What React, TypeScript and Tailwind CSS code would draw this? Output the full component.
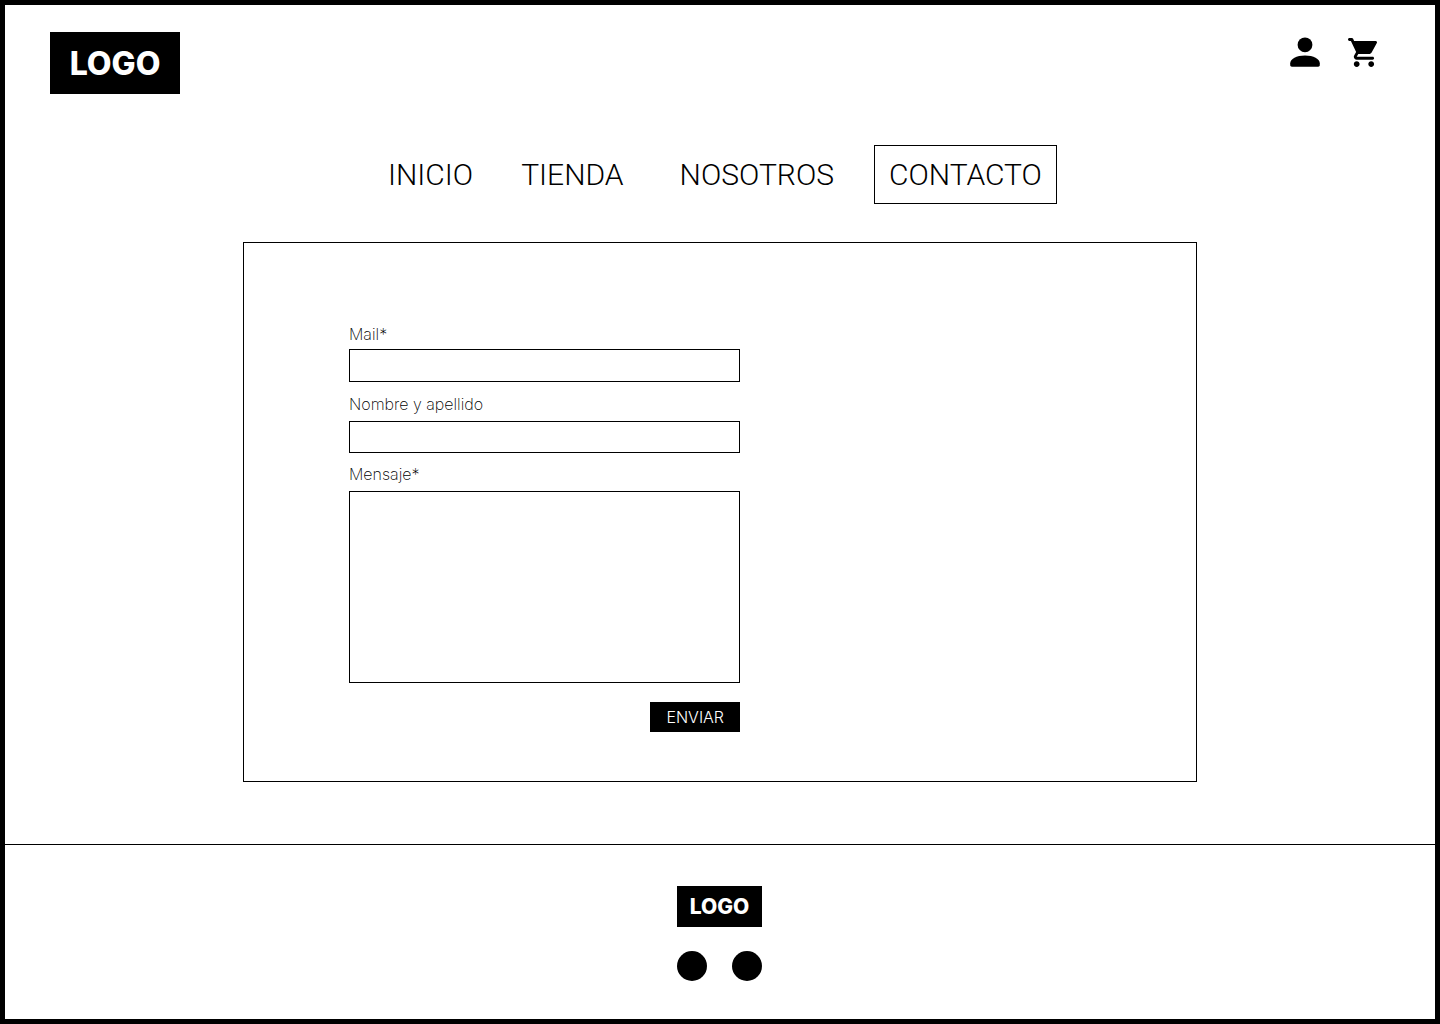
const fieldClass = "block w-full rounded-none border border-black bg-white px-2 text-base";
const labelClass = "block text-base leading-5 font-extralight";

function PersonIcon() {
  return (
    <svg viewBox="0 0 30 30" className="size-[30px]" fill="currentColor" aria-hidden="true">
      <circle cx="15" cy="7.8" r="7.4" />
      <path d="M15 18.500C6.500 18.500 0.200 22 0.200 26.200v1.900c0 1 .7 1.700 1.700 1.700h26.200c1 0 1.700-.7 1.700-1.700v-1.900c0-4.200-6.300-7.700-14.800-7.700z" />
    </svg>
  );
}

function CartIcon() {
  return (
    <svg viewBox="1 2 20 20" className="size-[29px]" fill="currentColor" aria-hidden="true">
      <path d="M7 18c-1.100 0-1.990.9-1.990 2S5.900 22 7 22s2-.9 2-2-.9-2-2-2zM1 3c0 .55.45 1 1 1h1l3.600 7.590-1.350 2.440C4.520 15.370 5.480 17 7 17h11c.55 0 1-.45 1-1s-.45-1-1-1H7l1.100-2h7.450c.75 0 1.410-.41 1.750-1.030l3.580-6.490c.37-.66-.11-1.480-.87-1.480H5.210l-.67-1.430c-.16-.35-.52-.57-.9-.57H2c-.55 0-1 .45-1 1zm16 15c-1.100 0-1.990.9-1.990 2s.89 2 1.990 2 2-.9 2-2-.9-2-2-2z" />
    </svg>
  );
}

export default function App() {
  return (
    <div className="flex min-h-screen flex-col border-[5px] border-black bg-white font-['Inter',sans-serif] text-black">
      <header className="flex items-start justify-between pt-[27px] pr-[58px] pl-[45px]">
        <a href="#inicio" className="w-[130px] bg-black pt-3 pb-2.5 text-center text-[32px] leading-10 font-extrabold text-white">
          LOGO
        </a>
        <div className="flex items-end gap-7 pt-[5px]">
          <button type="button" aria-label="Mi cuenta">
            <PersonIcon />
          </button>
          <button type="button" aria-label="Carrito">
            <CartIcon />
          </button>
        </div>
      </header>

      <nav className="mt-[51px] flex flex-wrap items-center justify-center pl-[5px] font-['Roboto',sans-serif] text-[30px] leading-[57px] font-light">
        <a href="#inicio" className="mr-12">INICIO</a>
        <a href="#tienda" className="mr-14">TIENDA</a>
        <a href="#nosotros" className="mr-10">NOSOTROS</a>
        <a href="#contacto" aria-current="page" className="border border-black px-3.5">CONTACTO</a>
      </nav>

      <main className="mx-auto mt-[38px] w-full max-w-[954px] border border-black px-[105px] pt-[81px] pb-[49px]">
        <form className="w-full max-w-[391px]">
          <label htmlFor="mail" className={labelClass}>Mail*</label>
          <input id="mail" type="email" required className={`${fieldClass} mt-[5px] h-[33px]`} />
          <label htmlFor="nombre" className={`${labelClass} mt-3`}>Nombre y apellido</label>
          <input id="nombre" type="text" className={`${fieldClass} mt-[7px] h-8`} />
          <label htmlFor="mensaje" className={`${labelClass} mt-[11px]`}>Mensaje*</label>
          <textarea id="mensaje" required className={`${fieldClass} mt-[7px] h-48 resize-none py-2`} />
          <button type="submit" className="mt-[19px] ml-auto block bg-black px-4 text-base leading-[30px] font-light text-white">
            ENVIAR
          </button>
        </form>
      </main>

      <footer className="mt-[62px] flex flex-1 flex-col items-center border-t border-black pt-[41px] pr-px pb-[38px]">
        <a href="#inicio" className="w-[85px] bg-black text-center text-[21px] leading-[41px] font-extrabold text-white">LOGO</a>
        <div className="mt-6 flex gap-[25px]">
          <a href="#facebook" aria-label="Facebook" className="size-[30px] rounded-full bg-black" />
          <a href="#instagram" aria-label="Instagram" className="size-[30px] rounded-full bg-black" />
        </div>
      </footer>
    </div>
  );
}
